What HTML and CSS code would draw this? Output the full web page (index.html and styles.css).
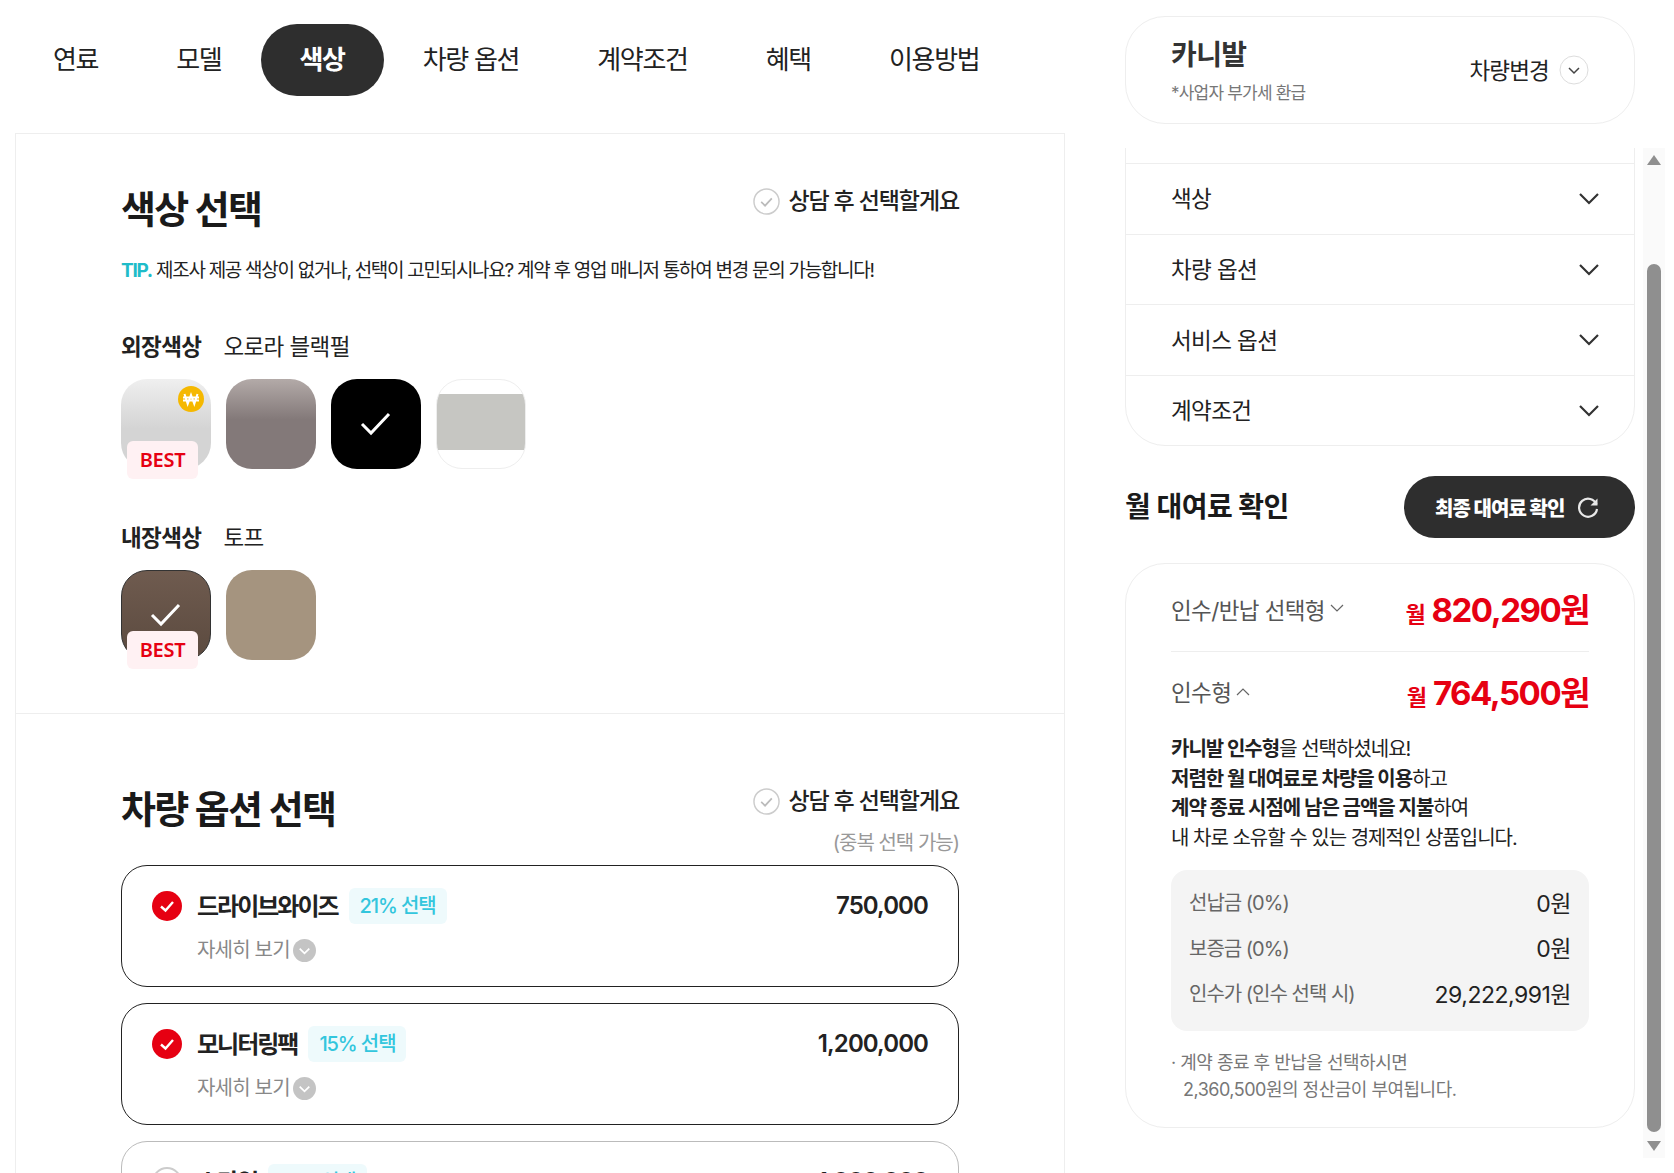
FILE: index.html
```html
<!DOCTYPE html>
<html lang="ko">
<head>
    <meta charset="UTF-8">
    <meta name="viewport" content="width=device-width, initial-scale=1.0">
    <title>카니발 견적</title>
    <link rel="stylesheet" href="styles.css">
</head>
<body>
    <div class="page">
        <main class="main">
            <nav class="tabs">
                <a class="tab">연료</a>
                <a class="tab">모델</a>
                <a class="tab active">색상</a>
                <a class="tab">차량 옵션</a>
                <a class="tab">계약조건</a>
                <a class="tab">혜택</a>
                <a class="tab">이용방법</a>
            </nav>
            <div class="panel">
                <section class="section color-section">
                    <div class="section-head">
                        <h2>색상 선택</h2>
                        <div class="consult">
                            <svg class="consult-icon" viewBox="0 0 28 28"><circle cx="14" cy="14" r="13" fill="none" stroke="#ccc" stroke-width="1.5"/><path d="M8.5 14.5l4 3.8 7-7.6" fill="none" stroke="#bbb" stroke-width="1.8"/></svg>
                            <span>상담 후 선택할게요</span>
                        </div>
                    </div>
                    <p class="tip"><b>TIP.</b> 제조사 제공 색상이 없거나, 선택이 고민되시나요? 계약 후 영업 매니저 통하여 변경 문의 가능합니다!</p>

                    <div class="color-label first"><b>외장색상</b><span>오로라 블랙펄</span></div>
                    <div class="swatches">
                        <div class="swatch white-pearl">
                            <svg class="won" viewBox="0 0 26 26"><circle cx="13" cy="13" r="13" fill="#f5b800"/><path d="M6.5 8l3.2 10 3.3-9 3.3 9 3.2-10M5 11.5h16M5 14.5h16" fill="none" stroke="#fff" stroke-width="2"/></svg>
                            <span class="best">BEST</span>
                        </div>
                        <div class="swatch gray-pearl"></div>
                        <div class="swatch black selected">
                            <svg class="check" viewBox="0 0 32 26"><path d="M2 13l9 9L29 3" fill="none" stroke="#fff" stroke-width="3"/></svg>
                        </div>
                        <div class="swatch silver"></div>
                    </div>

                    <div class="color-label"><b>내장색상</b><span>토프</span></div>
                    <div class="swatches">
                        <div class="swatch brown selected">
                            <svg class="check" viewBox="0 0 32 26"><path d="M2 13l9 9L29 3" fill="none" stroke="#fff" stroke-width="3"/></svg>
                            <span class="best">BEST</span>
                        </div>
                        <div class="swatch taupe"></div>
                    </div>
                </section>

                <section class="section option-section">
                    <div class="section-head">
                        <h2>차량 옵션 선택</h2>
                        <div class="consult">
                            <svg class="consult-icon" viewBox="0 0 28 28"><circle cx="14" cy="14" r="13" fill="none" stroke="#ccc" stroke-width="1.5"/><path d="M8.5 14.5l4 3.8 7-7.6" fill="none" stroke="#bbb" stroke-width="1.8"/></svg>
                            <span>상담 후 선택할게요</span>
                        </div>
                    </div>
                    <div class="multi-note">(중복 선택 가능)</div>

                    <div class="option on">
                        <div class="option-top">
                            <svg class="radio" viewBox="0 0 30 30"><circle cx="15" cy="15" r="15" fill="#e60012"/><path d="M9 15.5l4.5 4L21 11" fill="none" stroke="#fff" stroke-width="2.4"/></svg>
                            <span class="option-name">드라이브와이즈</span>
                            <span class="rate">21% 선택</span>
                            <span class="option-price">750,000</span>
                        </div>
                        <div class="more">자세히 보기<svg viewBox="0 0 24 24"><circle cx="12" cy="12" r="12" fill="#c4c4c4"/><path d="M7 10l5 5 5-5" fill="none" stroke="#fff" stroke-width="1.8"/></svg></div>
                    </div>
                    <div class="option on">
                        <div class="option-top">
                            <svg class="radio" viewBox="0 0 30 30"><circle cx="15" cy="15" r="15" fill="#e60012"/><path d="M9 15.5l4.5 4L21 11" fill="none" stroke="#fff" stroke-width="2.4"/></svg>
                            <span class="option-name">모니터링팩</span>
                            <span class="rate">15% 선택</span>
                            <span class="option-price">1,200,000</span>
                        </div>
                        <div class="more">자세히 보기<svg viewBox="0 0 24 24"><circle cx="12" cy="12" r="12" fill="#c4c4c4"/><path d="M7 10l5 5 5-5" fill="none" stroke="#fff" stroke-width="1.8"/></svg></div>
                    </div>
                    <div class="option">
                        <div class="option-top">
                            <svg class="radio" viewBox="0 0 30 30"><circle cx="15" cy="15" r="14" fill="#fff" stroke="#ccc" stroke-width="2"/></svg>
                            <span class="option-name">스타일</span>
                            <span class="rate">13% 선택</span>
                            <span class="option-price">1,000,000</span>
                        </div>
                    </div>
                </section>
            </div>
        </main>

        <aside class="side">
            <div class="car-card">
                <div>
                    <div class="car-name">카니발</div>
                    <div class="car-note">*사업자 부가세 환급</div>
                </div>
                <div class="car-change">
                    <span>차량변경</span>
                    <svg viewBox="0 0 30 30"><circle cx="15" cy="15" r="14" fill="#fff" stroke="#ddd" stroke-width="1"/><path d="M10 13l5 5 5-5" fill="none" stroke="#444" stroke-width="1.5"/></svg>
                </div>
            </div>

            <div class="side-scroll">
                <div class="side-content">
                    <div class="accordion">
                        <div class="acc-row"><span>색상</span><svg viewBox="0 0 22 14"><path d="M2 2l9 9 9-9" fill="none" stroke="#333" stroke-width="2.2"/></svg></div>
                        <div class="acc-row"><span>차량 옵션</span><svg viewBox="0 0 22 14"><path d="M2 2l9 9 9-9" fill="none" stroke="#333" stroke-width="2.2"/></svg></div>
                        <div class="acc-row"><span>서비스 옵션</span><svg viewBox="0 0 22 14"><path d="M2 2l9 9 9-9" fill="none" stroke="#333" stroke-width="2.2"/></svg></div>
                        <div class="acc-row"><span>계약조건</span><svg viewBox="0 0 22 14"><path d="M2 2l9 9 9-9" fill="none" stroke="#333" stroke-width="2.2"/></svg></div>
                    </div>

                    <div class="rent-head">
                        <h3>월 대여료 확인</h3>
                        <button class="rent-btn">최종 대여료 확인
                            <svg viewBox="0 0 24 24"><path d="M20.5 9.5A9 9 0 1 0 21 14" fill="none" stroke="#e8e8e8" stroke-width="2.2"/><path d="M21.5 3.5v7h-7z" fill="#e8e8e8"/></svg>
                        </button>
                    </div>

                    <div class="price-card">
                        <div class="price-row divided">
                            <div class="price-type">인수/반납 선택형<svg viewBox="0 0 14 9"><path d="M1 1l6 6 6-6" fill="none" stroke="#666" stroke-width="1.2"/></svg></div>
                            <div class="price"><small>월</small> 820,290원</div>
                        </div>
                        <div class="price-row open">
                            <div class="price-type">인수형<svg viewBox="0 0 14 9"><path d="M1 8l6-6 6 6" fill="none" stroke="#666" stroke-width="1.2"/></svg></div>
                            <div class="price"><small>월</small> 764,500원</div>
                        </div>
                        <p class="price-desc">
                            <b>카니발 인수형</b>을 선택하셨네요!<br>
                            <b>저렴한 월 대여료로 차량을 이용</b>하고<br>
                            <b>계약 종료 시점에 남은 금액을 지불</b>하여<br>
                            내 차로 소유할 수 있는 경제적인 상품입니다.
                        </p>
                        <div class="price-box">
                            <div class="box-row"><span>선납금 (0%)</span><strong>0원</strong></div>
                            <div class="box-row"><span>보증금 (0%)</span><strong>0원</strong></div>
                            <div class="box-row"><span>인수가 (인수 선택 시)</span><strong>29,222,991원</strong></div>
                        </div>
                        <p class="price-note">· 계약 종료 후 반납을 선택하시면<br><span>2,360,500원의 정산금이 부여됩니다.</span></p>
                    </div>
                </div>
                <div class="scrollbar">
                    <span class="arrow up"></span>
                    <span class="thumb"></span>
                    <span class="arrow down"></span>
                </div>
            </div>
        </aside>
    </div>
</body>
</html>
```

FILE: styles.css
```css
/* Reset and Base Styles */
* {
    margin: 0;
    padding: 0;
    box-sizing: border-box;
}
html, body {
    height: 100%;
    overflow: hidden;
}
body {
    font-family: Inter, "Noto Sans CJK KR", sans-serif;
    background: #fff;
    color: #222;
}
svg {
    display: block;
    flex-shrink: 0;
}
/* Layout */
.page {
    display: flex;
    height: 1173px;
    overflow: hidden;
}
.main {
    width: 1065px;
    margin-left: 14px;
    flex-shrink: 0;
}
.side {
    width: 540px;
    margin-left: 46px;
    flex-shrink: 0;
    padding-top: 16px;
}
/* Tabs */
.tabs {
    display: flex;
    padding-top: 24px;
    height: 133px;
}
.tab {
    height: 72px;
    padding: 0 39px;
    border-radius: 36px;
    font-size: 26px;
    line-height: 71px;
    letter-spacing: -1.3px;
    color: #222;
    white-space: nowrap;
}
.tab.active {
    background: #2e2e2e;
    color: #fff;
    font-weight: 700;
}
/* Left Panel */
.panel {
    border: 1px solid #eee;
    border-bottom: none;
    width: 1050px;
    margin-left: 1px;
}
.section {
    padding: 0 105px;
}
.color-section {
    height: 580px;
    padding-top: 45px;
    border-bottom: 1px solid #eee;
}
.option-section {
    padding-top: 65px;
}
.section-head {
    display: flex;
    justify-content: space-between;
    align-items: flex-start;
}
h2 {
    padding-top: 2px;
    font-size: 38px;
    line-height: 56px;
    font-weight: 700;
    letter-spacing: -1.7px;
    color: #1a1a1a;
}
.consult {
    display: flex;
    align-items: center;
    gap: 8px;
    margin-top: 2px;
    font-size: 23px;
    line-height: 40px;
    font-weight: 500;
    letter-spacing: -1.1px;
}
.consult-icon {
    width: 27px;
    height: 27px;
}
.tip {
    margin-top: 19px;
    font-size: 19px;
    line-height: 30px;
    letter-spacing: -1.28px;
    color: #222;
}
.tip b {
    color: #1fbcc9;
}
.color-label {
    display: flex;
    gap: 22px;
    margin-top: 52px;
    font-size: 22.5px;
    line-height: 34px;
    letter-spacing: -0.6px;
}
.color-label.first {
    margin-top: 44px;
}
.color-label b {
    font-weight: 700;
}
.swatches {
    display: flex;
    gap: 15px;
    margin-top: 15px;
}
.swatch {
    position: relative;
    width: 90px;
    height: 90px;
    border-radius: 26px;
    display: flex;
    align-items: center;
    justify-content: center;
}
.white-pearl {
    background: linear-gradient(#efefef, #d4d4d4 55%);
}
.gray-pearl {
    background: linear-gradient(#b3aaa8, #837979 45%);
}
.black {
    background: #000;
}
.silver {
    border: 1px solid #eee;
    background: linear-gradient(#fff 16%, #c6c6c2 16%, #c6c6c2 80%, #fff 80%);
}
.brown {
    background: linear-gradient(#6f5b4f, #5b4a3f);
    border: 1px solid #333;
}
.taupe {
    background: #a5947f;
}
.check {
    width: 32px;
    height: 26px;
}
.best {
    position: absolute;
    left: 6px;
    top: 62px;
    width: 71px;
    height: 38px;
    border-radius: 6px;
    background: #fff1f3;
    color: #e60012;
    font-family: "Noto Sans", sans-serif;
    font-size: 20px;
    font-weight: 600;
    line-height: 38px;
    text-align: center;
    letter-spacing: -0.3px;
}
.brown .best {
    left: 5px;
    top: 60px;
}
.won {
    position: absolute;
    right: 7px;
    top: 7px;
    width: 26px;
    height: 26px;
}
/* Options */
.multi-note {
    text-align: right;
    font-size: 20px;
    line-height: 30px;
    letter-spacing: -1px;
    color: #999;
    margin-top: -9px;
    margin-bottom: 7px;
}
.option {
    height: 122px;
    padding: 22px 30px 0;
    margin-bottom: 16px;
    border: 1px solid #bbb;
    border-radius: 26px;
}
.option.on {
    border-color: #222;
}
.option-top {
    display: flex;
    align-items: center;
    height: 36px;
}
.radio {
    width: 30px;
    height: 30px;
    margin-right: 15px;
}
.option-name {
    padding-bottom: 3px;
    font-size: 24px;
    font-weight: 600;
    letter-spacing: -2px;
    margin-right: 11px;
}
.rate {
    height: 36px;
    padding: 0 11px;
    border-radius: 6px;
    background: #eefafc;
    color: #33c6dd;
    font-size: 20px;
    font-weight: 500;
    line-height: 36px;
    letter-spacing: -1.1px;
}
.option-price {
    margin-left: auto;
    padding-bottom: 2px;
    font-size: 24px;
    font-weight: 600;
    letter-spacing: -0.9px;
}
.more {
    display: flex;
    align-items: center;
    margin: 9px 0 0 45px;
    font-size: 20px;
    line-height: 34px;
    letter-spacing: -0.8px;
    color: #888;
}
.more svg {
    width: 23px;
    height: 23px;
    margin-left: 3px;
}
/* Car Card */
.car-card {
    width: 510px;
    height: 108px;
    padding: 0 45px;
    display: flex;
    align-items: center;
    justify-content: space-between;
    border: 1px solid #eee;
    border-radius: 40px;
}
.car-name {
    font-size: 28px;
    font-weight: 700;
    line-height: 40px;
    color: #333;
    letter-spacing: -0.6px;
}
.car-note {
    margin-top: 6px;
    font-size: 17px;
    line-height: 24px;
    letter-spacing: -0.8px;
    color: #777;
}
.car-change {
    display: flex;
    align-items: center;
    gap: 10px;
    font-size: 22.5px;
    letter-spacing: -0.8px;
}
.car-change span {
    padding-bottom: 2px;
}
.car-change svg {
    width: 30px;
    height: 30px;
}
/* Sidebar Scroll */
.side-scroll {
    display: flex;
    gap: 8px;
    margin-top: 24px;
    height: 1010px;
}
.side-content {
    width: 510px;
    padding-top: 15px;
}
.accordion {
    position: relative;
    border: 1px solid #eee;
    border-radius: 0 0 40px 40px;
}
.accordion::before {
    content: "";
    position: absolute;
    left: -1px;
    right: -1px;
    top: -16px;
    height: 16px;
    border-left: 1px solid #eee;
    border-right: 1px solid #eee;
}
.acc-row {
    height: 70.7px;
    padding: 0 34px 0 45px;
    display: flex;
    align-items: center;
    justify-content: space-between;
    font-size: 22.5px;
    letter-spacing: -0.6px;
    border-bottom: 1px solid #eee;
}
.acc-row span {
    padding-bottom: 3px;
}
.acc-row:last-child {
    height: 69px;
    border-bottom: none;
}
.acc-row svg {
    width: 22px;
    height: 14px;
}
.rent-head {
    display: flex;
    align-items: center;
    justify-content: space-between;
    margin-top: 30px;
}
h3 {
    padding-bottom: 4px;
    font-size: 28px;
    font-weight: 700;
    letter-spacing: -0.5px;
    color: #1a1a1a;
}
.rent-btn {
    display: flex;
    align-items: center;
    gap: 12px;
    height: 62px;
    width: 231px;
    padding-left: 31px;
    border: none;
    border-radius: 31px;
    background: #2e2e2e;
    color: #fff;
    font-family: inherit;
    font-size: 20px;
    font-weight: 800;
    letter-spacing: -0.9px;
}
.rent-btn svg {
    width: 24px;
    height: 24px;
}
/* Price Card */
.price-card {
    height: 565px;
    margin-top: 25px;
    padding: 0 45px;
    border: 1px solid #eee;
    border-radius: 40px;
}
.price-row {
    display: flex;
    align-items: center;
    justify-content: space-between;
    height: 83px;
}
.divided {
    height: 88px;
    border-bottom: 1px solid #eee;
}
.divided .price-type {
    padding-top: 2px;
}
.open {
    padding-bottom: 5px;
}
.price-type {
    display: flex;
    align-items: center;
    gap: 5px;
    font-size: 22.5px;
    letter-spacing: -0.6px;
    color: #555;
}
.price-type svg {
    width: 14px;
    height: 9px;
}
.price {
    font-size: 33px;
    font-weight: 700;
    color: #e60012;
    letter-spacing: -1.5px;
}
.price small {
    font-size: 22px;
    font-weight: 600;
    letter-spacing: -0.5px;
}
.price-desc {
    margin-top: 0;
    font-size: 20px;
    line-height: 29.5px;
    letter-spacing: -1px;
    color: #222;
}
.price-desc b {
    font-weight: 700;
}
.price-box {
    margin-top: 17px;
    height: 161px;
    padding: 9px 18px;
    background: #f4f4f4;
    border-radius: 16px;
}
.box-row {
    display: flex;
    justify-content: space-between;
    align-items: center;
    height: 45.5px;
    font-size: 20px;
    letter-spacing: -1px;
    color: #666;
}
.box-row strong {
    font-weight: 400;
    font-size: 23px;
    letter-spacing: -0.5px;
    color: #222;
}
.price-note {
    margin-top: 18px;
    font-size: 18px;
    line-height: 27px;
    letter-spacing: -0.5px;
    color: #777;
}
.price-note span {
    padding-left: 12px;
}
/* Scrollbar */
.scrollbar {
    width: 22px;
    background: #fafafa;
    position: relative;
}
.arrow {
    position: absolute;
    left: 4px;
    width: 0;
    height: 0;
    border-left: 7px solid transparent;
    border-right: 7px solid transparent;
}
.arrow.up {
    top: 7px;
    border-bottom: 10px solid #8f8f8f;
}
.arrow.down {
    bottom: 7px;
    border-top: 10px solid #8f8f8f;
}
.thumb {
    position: absolute;
    left: 4px;
    top: 116px;
    width: 14px;
    height: 868px;
    border-radius: 7px;
    background: #8f8f8f;
}
```
